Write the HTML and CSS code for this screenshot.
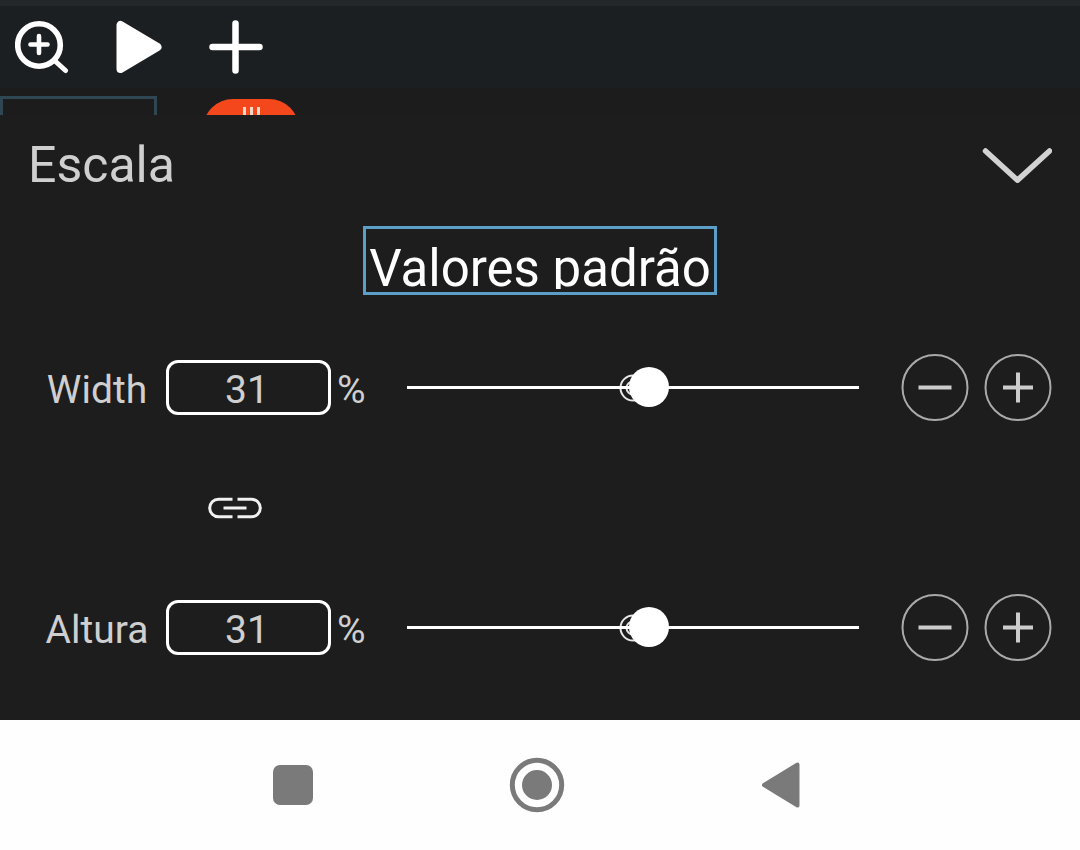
FILE: index.html
```html
<!DOCTYPE html>
<html lang="pt-BR">
<head>
<meta charset="utf-8">
<meta name="viewport" content="width=device-width, initial-scale=1">
<title>Escala</title>
<link rel="stylesheet" href="styles.css">
</head>
<body>
<div class="app">
  <header class="toolbar">
    <button class="tool" type="button" aria-label="Zoom">
      <svg viewBox="0 0 54 54" fill="none" stroke="#fff" stroke-linecap="round">
        <circle cx="24" cy="25" r="21.3" stroke-width="5.6"/>
        <path d="M24 16v17M15.500 24.500h17" stroke-width="4.600"/>
        <path d="M39.500 40.500L50.500 50.500" stroke-width="5"/>
      </svg>
    </button>
    <button class="tool" type="button" aria-label="Reproduzir">
      <svg viewBox="0 0 54 54" fill="#fff" stroke="#fff" stroke-width="8" stroke-linejoin="round">
        <path d="M8.500 5v44L45.500 27z"/>
      </svg>
    </button>
    <button class="tool" type="button" aria-label="Adicionar">
      <svg viewBox="0 0 54 54" fill="none" stroke="#fff" stroke-width="6.500" stroke-linecap="round">
        <path d="M26.500 3.500v47M3.500 27h47"/>
      </svg>
    </button>
  </header>

  <div class="timeline">
    <div class="clip"></div>
    <button class="handle" type="button" aria-label="Camada">
      <svg viewBox="0 0 18 24" fill="#fbd9c9"><path d="M1 0h3v24h-3zM8 0h3v24h-3zM15 0h3v24h-3z"/></svg>
    </button>
  </div>

  <main class="panel">
    <div class="panel-head">
      <h1 class="title">Escala</h1>
      <button class="collapse" type="button" aria-label="Fechar">
        <svg viewBox="0 0 70 36" fill="none" stroke="#d2d2d2" stroke-width="5.500" stroke-linecap="round" stroke-linejoin="round">
          <path d="M3.500 4L35.500 33.200L67.500 4"/>
        </svg>
      </button>
    </div>

    <button class="defaults" type="button"><span class="defaults-text">Valores padrão</span></button>

    <div class="row">
      <label class="label" for="width">Width</label>
      <input class="value" id="width" type="text" inputmode="numeric" value="31">
      <span class="unit">%</span>
      <div class="slider">
        <svg class="origin" viewBox="0 0 28 28" fill="none" stroke="#e6e6e6" stroke-width="2"><circle cx="14" cy="14" r="12.500"/><circle cx="14" cy="14" r="6.500"/></svg>
        <input class="range" type="range" min="0" max="100" value="54" aria-label="Width">
      </div>
      <div class="steps">
        <button class="step" type="button" aria-label="Diminuir Width"><svg viewBox="0 0 68 68"><circle cx="34" cy="33.500" r="32.500"/><path d="M17.500 33.500h33"/></svg></button>
        <button class="step" type="button" aria-label="Aumentar Width"><svg viewBox="0 0 68 68"><circle cx="34" cy="33.500" r="32.500"/><path d="M19 33.500h30M34 18.500v30"/></svg></button>
      </div>
    </div>

    <div class="link-row">
      <button class="link" type="button" aria-label="Manter proporção">
        <svg viewBox="0 0 54 22" fill="none" stroke="#f0f0f0" stroke-width="3">
          <path d="M24.500 2.200H10.500a8.800 8.800 0 0 0 0 17.600h14M29.500 2.200H43.500a8.800 8.800 0 0 1 0 17.600H29.500M15.500 11h23"/>
        </svg>
      </button>
    </div>

    <div class="row">
      <label class="label" for="height">Altura</label>
      <input class="value" id="height" type="text" inputmode="numeric" value="31">
      <span class="unit">%</span>
      <div class="slider">
        <svg class="origin" viewBox="0 0 28 28" fill="none" stroke="#e6e6e6" stroke-width="2"><circle cx="14" cy="14" r="12.500"/><circle cx="14" cy="14" r="6.500"/></svg>
        <input class="range" type="range" min="0" max="100" value="54" aria-label="Altura">
      </div>
      <div class="steps">
        <button class="step" type="button" aria-label="Diminuir Altura"><svg viewBox="0 0 68 68"><circle cx="34" cy="33.500" r="32.500"/><path d="M17.500 33.500h33"/></svg></button>
        <button class="step" type="button" aria-label="Aumentar Altura"><svg viewBox="0 0 68 68"><circle cx="34" cy="33.500" r="32.500"/><path d="M19 33.500h30M34 18.500v30"/></svg></button>
      </div>
    </div>
  </main>

  <nav class="system-nav" aria-label="Sistema">
    <button class="nav-button" type="button" aria-label="Recentes"><svg viewBox="0 0 56 56" fill="#7a7a7a"><rect x="8" y="8" width="40" height="40" rx="7"/></svg></button>
    <button class="nav-button" type="button" aria-label="Início"><svg viewBox="0 0 56 56" fill="#7a7a7a"><circle cx="28" cy="28" r="15"/><circle cx="28" cy="28" r="24.700" fill="none" stroke="#7a7a7a" stroke-width="5"/></svg></button>
    <button class="nav-button" type="button" aria-label="Voltar"><svg viewBox="0 0 56 56" fill="#7a7a7a" stroke="#7a7a7a" stroke-width="4" stroke-linejoin="round"><path d="M44.500 7.500v41L11 28z"/></svg></button>
  </nav>
</div>
</body>
</html>
```
FILE: styles.css
```css
* {
  box-sizing: border-box;
}

body {
  margin: 0;
  background: #fefefe;
  font-family: Roboto, "Noto Sans", sans-serif;
}

button {
  margin: 0;
  padding: 0;
  border: 0;
  background: none;
  font: inherit;
  color: inherit;
}

svg {
  display: block;
}

.app {
  min-height: 100vh;
  display: flex;
  flex-direction: column;
}

.toolbar {
  display: flex;
  gap: 43px;
  padding: 14px 15px;
  border-top: 6px solid #23272a;
  background: #1b1f21;
}

.tool,
.tool svg {
  width: 54px;
  height: 54px;
}

.timeline {
  display: flex;
  gap: 46px;
  height: 27px;
  padding-top: 8px;
  overflow: hidden;
  background: #1c1c1c;
}

.clip {
  width: 157px;
  height: 60px;
  border: 3px solid #2f4653;
}

.handle {
  display: flex;
  justify-content: center;
  width: 96px;
  height: 60px;
  margin-top: 3px;
  padding-top: 8px;
  border-radius: 30px;
  background: #f4481c;
}

.handle svg {
  width: 18px;
  height: 24px;
}

.panel {
  display: flex;
  flex-direction: column;
  padding: 0 28px 58px;
  background: #1d1d1d;
  color: #cfcfcf;
}

.panel-head {
  display: flex;
  align-items: center;
  justify-content: space-between;
}

.title {
  margin: 0;
  font-size: 50px;
  font-weight: 400;
  line-height: 100px;
}

.collapse svg {
  width: 70px;
  height: 36px;
}

.defaults {
  align-self: center;
  margin: 11px 0 59px;
  padding: 0 3px 3px;
  border: 3px solid #5b9ec7;
  color: #fff;
}

.defaults-text {
  display: block;
  height: 60px;
  overflow: hidden;
  font-size: 51px;
  line-height: 80px;
}

.row {
  display: grid;
  grid-template-columns: 138px 165px 76px 1fr auto;
  align-items: center;
  height: 67px;
  margin-bottom: 1px;
  font-size: 39px;
}

.label {
  text-align: center;
}

.value {
  width: 100%;
  height: 55px;
  padding: 4px 3px 0 0;
  border: 3px solid #fff;
  border-radius: 12px;
  background: transparent;
  color: inherit;
  font: inherit;
  text-align: center;
}

.unit {
  padding-left: 6px;
}

.label,
.unit {
  padding-top: 4px;
}

.slider {
  position: relative;
  margin-right: 42px;
}

.origin {
  position: absolute;
  top: 50%;
  left: 50%;
  width: 28px;
  height: 28px;
  transform: translate(-50%, -50%);
}

.range {
  position: relative;
  display: block;
  width: 100%;
  height: 40px;
  margin: 0;
  background: transparent;
  appearance: none;
}

.range::-webkit-slider-runnable-track {
  height: 3px;
  background: #fff;
}

.range::-webkit-slider-thumb {
  width: 40px;
  height: 40px;
  margin-top: -19px;
  border-radius: 50%;
  background: #fff;
  appearance: none;
}

.steps {
  display: flex;
  gap: 15px;
  height: 67px;
}

.step svg {
  width: 68px;
  height: 68px;
  fill: none;
  stroke: #aaa;
  stroke-width: 2;
}

.step path {
  stroke: #ccc;
  stroke-width: 4;
}

.link-row {
  display: flex;
  padding: 75px 0 75px 180px;
}

.link svg {
  width: 54px;
  height: 22px;
}

.system-nav {
  flex: 1;
  display: grid;
  grid-template-columns: repeat(3, 244px);
  justify-content: center;
  place-items: center;
  min-height: 130px;
  padding-right: 6px;
  background: #fefefe;
}

.nav-button svg {
  width: 56px;
  height: 56px;
}
```
